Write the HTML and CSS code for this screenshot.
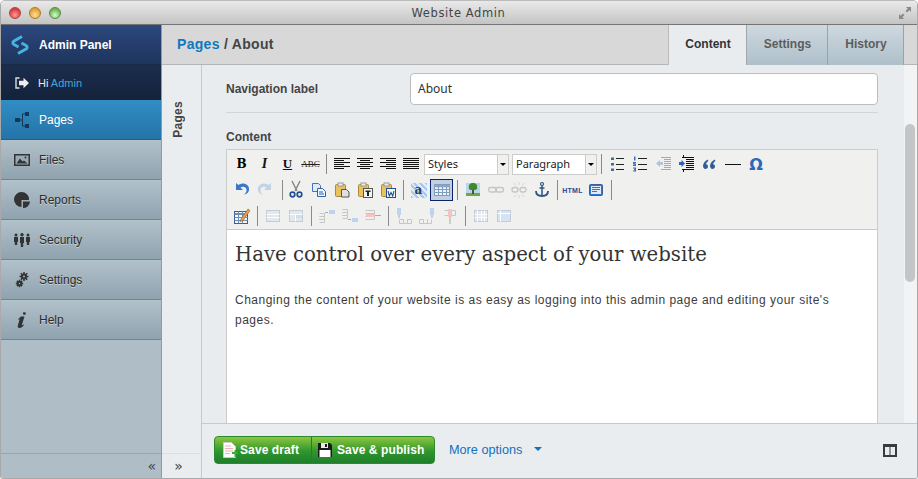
FILE: index.html
```html
<!DOCTYPE html>
<html lang="en">

<head>
  <meta charset="utf-8">
  <title>Website Admin</title>
  <link rel="stylesheet" href="styles.css">
</head>

<body>
  <svg class="defs" width="0" height="0">
    <symbol id="al-left" viewBox="0 0 20 20"><path d="M2 4.5h16M2 6.5h10M2 8.5h16M2 10.5h10M2 12.5h16M2 14.5h10" stroke="#111"/></symbol>
    <symbol id="al-center" viewBox="0 0 20 20"><path d="M2 4.5h16M5 6.5h10M2 8.5h16M5 10.5h10M2 12.5h16M5 14.5h10" stroke="#111"/></symbol>
    <symbol id="al-right" viewBox="0 0 20 20"><path d="M2 4.5h16M8 6.5h10M2 8.5h16M8 10.5h10M2 12.5h16M8 14.5h10" stroke="#111"/></symbol>
    <symbol id="al-full" viewBox="0 0 20 20"><path d="M2 4.5h16M2 6.5h16M2 8.5h16M2 10.5h16M2 12.5h16M2 14.5h16" stroke="#111"/></symbol>
    <symbol id="ul" viewBox="0 0 20 20"><path d="M9 4.500h8M9 10.500h8M9 15.500h8" stroke="#222"/><path d="M4 3.500h3v2.500H4zM4 9h3v2.500H4zM4 14.500h3V17H4z" fill="#4a6a94"/></symbol>
    <symbol id="ol" viewBox="0 0 20 20"><path d="M8 4.500h9M8 10.500h9M8 15.500h9" stroke="#222"/><path d="M4 2.500h1.500v4H4zM3 8h3v1H4.500v.5H6V12H3v-1h1.500v-.5H3zM3 13.500h3v4H3v-1h1.500V16H4v-.800h.5v-.700H3z" fill="#3a6ec0"/></symbol>
    <symbol id="outdent" viewBox="0 0 20 20"><path d="M8 3.500h10M11 5.500h7M11 7.500h7M11 9.500h7M11 11.500h7M11 13.500h7M8 15.500h10" stroke="#aaa"/><path d="M3 9.500l4-3.500v2h3v3H7v2z" fill="#b0c4dc"/></symbol>
    <symbol id="indent" viewBox="0 0 20 20"><path d="M6 3.500h12M10 5.500h8M10 7.500h8M10 9.500h8M10 11.500h8M10 13.500h8M6 15.500h12" stroke="#111"/><path d="M9 9.500L5.500 6v2H3v3h2.500v2z" fill="#2a62c0"/><path d="M7.500 1v2M7.500 16v2" stroke="#111"/></symbol>
    <symbol id="quote" viewBox="0 0 20 20"><path d="M9 5.500C6.500 6.500 4.500 8.500 4 11.500c0 2.200 1 3.500 2.400 3.500C7.800 15 9 14 9 12.500S8 10.200 7 10.200c.3-1.300 1-2.300 2.300-3.300zM16 5.500c-2.500 1-4.500 3-5 6 0 2.200 1 3.500 2.400 3.500 1.400 0 2.600-1 2.600-2.500s-1-2.300-2-2.300c.3-1.300 1-2.300 2.300-3.300z" fill="#2f5d94"/></symbol>
    <symbol id="undo" viewBox="0 0 20 20"><path d="M4 3v7h7L8.500 7.500c2.500-1.500 5.500-.7 6 2 .3 2-.5 3.500-2.500 5 3.500-.5 5.500-3 5-6.500C16 3.500 10.500 2 6.500 5z" fill="#3c78c8"/></symbol>
    <symbol id="redo" viewBox="0 0 20 20"><path d="M16 3v7H9l2.500-2.500c-2.500-1.500-5.500-.7-6 2-.3 2 .5 3.500 2.500 5-3.500-.5-5.500-3-5-6.500C4 3.500 9.500 2 13.500 5z" fill="#c2d2e2"/></symbol>
    <symbol id="cut" viewBox="0 0 20 20"><path d="M6 1l5 10M14 1L9 11" stroke="#888" stroke-width="1.500" fill="none"/><circle cx="6.500" cy="14.500" r="2.300" fill="none" stroke="#24508f" stroke-width="1.700"/><circle cx="13.500" cy="14.500" r="2.300" fill="none" stroke="#24508f" stroke-width="1.700"/></symbol>
    <symbol id="copy" viewBox="0 0 20 20"><path d="M3.500 3.500h6l2 2v6h-8z" fill="#dfeaf8" stroke="#3f75bd"/><path d="M8.500 8.500h5l3 3v5h-8z" fill="#f2f7fd" stroke="#2d62ad"/><path d="M10 12h4M10 14h5" stroke="#2d62ad"/></symbol>
    <symbol id="paste" viewBox="0 0 20 20"><rect x="3.500" y="4.500" width="10" height="12" rx="1" fill="#e9c25e" stroke="#a88a3e"/><rect x="6" y="3" width="5" height="3" fill="#eee" stroke="#999"/><path d="M9.500 9.500h5l2.500 2.500v5H9.500z" fill="#dfe2e5" stroke="#555"/></symbol>
    <symbol id="paste-t" viewBox="0 0 20 20"><rect x="3.500" y="4.500" width="10" height="12" rx="1" fill="#e9c25e" stroke="#a88a3e"/><rect x="6" y="3" width="5" height="3" fill="#eee" stroke="#999"/><rect x="8.500" y="8.500" width="9" height="9" fill="#f4f4f4" stroke="#555"/><path d="M10.500 10.500h5V12h-1.500v4h-2v-4h-1.500z" fill="#222"/></symbol>
    <symbol id="paste-w" viewBox="0 0 20 20"><rect x="3.500" y="4.500" width="10" height="12" rx="1" fill="#e9c25e" stroke="#a88a3e"/><rect x="6" y="3" width="5" height="3" fill="#eee" stroke="#999"/><rect x="8.500" y="8.500" width="9" height="9" fill="#f4f7fc" stroke="#24508f"/><path d="M10 11l1.300 5 1.700-3.500 1.700 3.500 1.300-5" stroke="#24508f" stroke-width="1.100" fill="none"/></symbol>
    <symbol id="table" viewBox="0 0 20 20"><rect x="2.500" y="4.500" width="15" height="11" fill="#eef3fa" stroke="#7f9cc0"/><path d="M2.500 6h15" stroke="#8aa6c8" stroke-width="2.500"/><path d="M6.500 4.500v11M10.500 4.500v11M14.500 4.500v11M2.500 9.500h15M2.500 12.500h15" stroke="#7f9cc0"/></symbol>
    <symbol id="image" viewBox="0 0 20 20"><rect x="3" y="3" width="14" height="13" fill="#b9d6ef"/><rect x="3" y="13" width="14" height="3" fill="#6aa84a"/><path d="M10 3c3 0 4.500 2 4 4 1 2-1 3-2.500 3h-3C7 10 5 9 6 7 5.500 5 7 3 10 3z" fill="#3f8a2e"/><path d="M9 10h2v4H9z" fill="#6b4a22"/></symbol>
    <symbol id="link" viewBox="0 0 20 20"><rect x="2.500" y="7.500" width="8" height="4.500" rx="2.200" fill="none" stroke="#c6c6c6" stroke-width="1.300"/><rect x="9.500" y="7.500" width="8" height="4.500" rx="2.200" fill="none" stroke="#c6c6c6" stroke-width="1.300"/></symbol>
    <symbol id="unlink" viewBox="0 0 20 20"><rect x="3" y="7.500" width="6" height="4.500" rx="2.200" fill="none" stroke="#c6c6c6" stroke-width="1.300"/><rect x="11" y="7.500" width="6" height="4.500" rx="2.200" fill="none" stroke="#c6c6c6" stroke-width="1.300"/><path d="M10 2v3M10 15v3M5 3l2 2.500M15 3l-2 2.500M5 17l2-2.500M15 17l-2-2.500" stroke="#d4d4d4"/></symbol>
    <symbol id="anchor" viewBox="0 0 20 20"><circle cx="10" cy="4" r="1.500" fill="none" stroke="#2f5580" stroke-width="1.200"/><path d="M10 5.500V16M7.500 8h5" stroke="#2f5580" stroke-width="1.500"/><path d="M4 11c0 3.500 2.500 5 6 5s6-1.500 6-5" fill="none" stroke="#2f5580" stroke-width="1.800"/></symbol>
    <symbol id="box" viewBox="0 0 20 20"><rect x="3.500" y="4.500" width="13" height="11" rx="1" fill="#2f78d0" stroke="#3a5f9a"/><rect x="5" y="6" width="10" height="8" fill="#dfeafa"/><path d="M6 7.500h8M6 9.500h8M6 11.500h5" stroke="#2f78d0"/></symbol>
    <symbol id="t-edit" viewBox="0 0 20 20"><rect x="2.500" y="5.500" width="13" height="12" fill="#f2f6fb" stroke="#3a5f8f"/><path d="M2.500 8h13" stroke="#6f8fb8" stroke-width="2"/><path d="M6.500 5.500v12M10.500 5.500v12M2.500 11.500h13M2.500 14.500h13" stroke="#6f8fb8"/><path d="M9 13l7-10 2 1.500-7 10-3 1z" fill="#e8a24a" stroke="#8c5a20" stroke-width=".6"/></symbol>
    <symbol id="t-row" viewBox="0 0 20 20"><rect x="3.500" y="4.500" width="13" height="11" fill="#e2e8ef" stroke="#c3ccd6"/><path d="M3.500 8.500h13M3.500 11.500h13" stroke="#fff"/></symbol>
    <symbol id="t-cell" viewBox="0 0 20 20"><rect x="3.500" y="4.500" width="13" height="11" fill="#e2e8ef" stroke="#c3ccd6"/><path d="M3.500 8.500h13M9.500 8.500v7" stroke="#fff"/><rect x="10" y="9" width="6" height="3" fill="#d2dde8"/></symbol>
    <symbol id="row-a" viewBox="0 0 20 20"><path d="M2.500 7.500h5v3h-5M2.500 10.500h5v3h-5M2.500 13.500h5v3h-5" fill="none" stroke="#c6c6c6"/><path d="M8 6.500h3" stroke="#aaa"/><rect x="12" y="4" width="6" height="4" fill="#bcd4ee"/></symbol>
    <symbol id="row-b" viewBox="0 0 20 20"><path d="M2.500 3.500h5v3h-5M2.500 6.500h5v3h-5M2.500 9.500h5v3h-5" fill="none" stroke="#c6c6c6"/><path d="M8 13.500h3" stroke="#aaa"/><rect x="12" y="12" width="6" height="4" fill="#bcd4ee"/></symbol>
    <symbol id="row-c" viewBox="0 0 20 20"><path d="M2.500 4.500h9v3h-9M2.500 7.500h9v3h-9M2.500 10.500h9v3h-9" fill="none" stroke="#c6c6c6"/><rect x="3" y="8" width="9" height="3" fill="#f4c4c4"/><path d="M12 9.500h6" stroke="#aaa"/></symbol>
    <symbol id="col-a" viewBox="0 0 20 20"><rect x="3" y="2" width="4" height="7" fill="#bcd4ee"/><path d="M5 9v3" stroke="#aaa"/><path d="M5.500 13.500v4h4v-4h-4M9.500 13.500v4h4v-4M13.500 13.500v4h4v-4h-4" fill="none" stroke="#c6c6c6"/></symbol>
    <symbol id="col-b" viewBox="0 0 20 20"><rect x="13" y="2" width="4" height="7" fill="#bcd4ee"/><path d="M15 9v3" stroke="#aaa"/><path d="M2.500 13.500v4h4v-4zM6.500 13.500v4h4v-4M10.500 13.500v4h4v-4" fill="none" stroke="#c6c6c6"/></symbol>
    <symbol id="col-c" viewBox="0 0 20 20"><path d="M4.500 4.500h4v5h-4M8.500 4.500h3v5h-3M11.500 4.500h4v5h-4" fill="none" stroke="#c6c6c6"/><rect x="8" y="3" width="4" height="8" fill="#f4c4c4"/><path d="M10 11v7" stroke="#aaa"/></symbol>
    <symbol id="t-split" viewBox="0 0 20 20"><rect x="3.500" y="4.500" width="13" height="11" fill="#dfe8f2" stroke="#c3ccd6"/><path d="M3.500 8.500h13M3.500 11.500h13M6.500 4.500v11M10.500 4.500v11M13.500 4.500v11" stroke="#fff"/></symbol>
    <symbol id="t-merge" viewBox="0 0 20 20"><rect x="3.500" y="4.500" width="13" height="11" fill="#d3e4f5" stroke="#c3ccd6"/><path d="M3.500 7.500h13M6.500 4.500v11" stroke="#fff"/></symbol>
  </svg>

  <div class="window">
    <header class="titlebar">
      <div class="lights"><i class="light red"></i><i class="light amber"></i><i class="light green"></i></div>
      <div class="win-title">Website Admin</div>
      <svg class="fullscreen" width="14" height="14" viewBox="0 0 14 14"><path d="M8 1h5v5l-1.700-1.700L9 6.500 7.500 5l2.200-2.300zM6 13H1V8l1.700 1.700L5 7.500 6.500 9l-2.200 2.300z" fill="#8a8a8a"/></svg>
    </header>

    <div class="app">
      <aside class="sidebar">
        <div class="brand">
          <svg class="logo" width="20" height="20" viewBox="0 0 20 20"><path d="M12 1.500L4 6c-1.500 1-1.500 2.500 0 3.500l4.500 2.500M8 18.500l8-4.500c1.500-1 1.500-2.500 0-3.500L11.500 8" fill="none" stroke="#45b2e2" stroke-width="3"/></svg>
          <strong>Admin Panel</strong>
        </div>
        <div class="user">
          <svg width="14" height="12" viewBox="0 0 14 12"><path d="M4.500 1H1v10h3.500" fill="none" stroke="#ddd" stroke-width="1.400"/><path d="M4 3.800h4.500V.8L14 6l-5.500 5.200v-3H4z" fill="#eee"/></svg>
          <span>Hi <a class="user-link" href="#">Admin</a></span>
        </div>
        <nav class="nav">
          <a class="nav-item active" href="#">
            <span class="nav-ico"><svg width="14" height="16" viewBox="0 0 14 16"><path d="M0 6h5v4H0zM10 0h4v4h-4zM10 12h4v4h-4z" fill="#123a58"/><path d="M5 8h2.500M7.500 2v12M7.500 2H10M7.500 14H10" stroke="#123a58" fill="none"/></svg></span>Pages</a>
          <a class="nav-item" href="#">
            <span class="nav-ico"><svg width="16" height="12" viewBox="0 0 16 12"><rect x=".75" y=".75" width="14.500" height="10.500" fill="#9aa9b3" stroke="#333" stroke-width="1.500"/><path d="M2.500 9.500l3.500-5 2.500 3 1.500-1 3.500 3z" fill="#333"/><circle cx="11.500" cy="3.500" r="1" fill="#333"/></svg></span>Files</a>
          <a class="nav-item" href="#">
            <span class="nav-ico"><svg width="16" height="16" viewBox="0 0 16 16"><path d="M7.500 0a7.500 7.500 0 1 0 0 15V8h7.500A7.500 7.500 0 0 0 7.500 0z" fill="#333"/><path d="M9 9.500h7a7 7 0 0 1-7 6.500z" fill="#333"/></svg></span>Reports</a>
          <a class="nav-item" href="#">
            <span class="nav-ico"><svg width="16" height="14" viewBox="0 0 16 14"><g fill="#333"><circle cx="2" cy="2" r="1.500"/><circle cx="8" cy="1.700" r="1.700"/><circle cx="14" cy="2" r="1.500"/><path d="M0 4h4v5H3.200v3H.8V9H0zM6 4h4v6H9.200v4H6.800v-4H6zM12 4h4v5h-.8v3h-2.400V9H12z"/></g></svg></span>Security</a>
          <a class="nav-item" href="#">
            <span class="nav-ico"><svg width="14" height="16" viewBox="0 0 14 16"><g fill="none" stroke="#333"><circle cx="9" cy="4.500" r="2" stroke-width="2"/><path d="M9 0v2M9 7v2M4.500 4.500h2M11.500 4.500h2M5.800 1.300l1.400 1.400M10.800 6.300l1.400 1.400M5.800 7.700l1.400-1.400M10.800 2.700l1.400-1.400" stroke-width="1.500"/><circle cx="4.500" cy="11.500" r="1.800" stroke-width="2"/><path d="M4.500 7.800v1.700M4.500 13.500v1.700M.8 11.500h1.700M6.500 11.500h1.700M1.900 8.900l1.200 1.200M5.900 12.900l1.200 1.200M1.900 14.100l1.200-1.200M5.900 10.100l1.200-1.200" stroke-width="1.500"/></g></svg></span>Settings</a>
          <a class="nav-item" href="#">
            <span class="nav-ico"><svg width="10" height="16" viewBox="0 0 10 16"><path d="M6.500 0l2.500.8-.8 2.200-2.400-.8zM4 4.500h3.500L5 12.500c-.2.800.5.800 1.500 0l.5.600c-1.500 2-3 2.900-4.500 2.900-1.300 0-2-.8-1.700-2.200l1.800-6.500-1.100.5-.3-.8z" fill="#333"/></svg></span>Help</a>
        </nav>
        <div class="side-foot"><span class="chev">«</span></div>
      </aside>

      <main class="main">
        <div class="topbar">
          <div class="crumb"><a class="crumb-link" href="#">Pages</a> / About</div>
          <div class="tabs">
            <a class="tab tab-on" href="#">Content</a>
            <a class="tab tab-mid" href="#">Settings</a>
            <a class="tab tab-last" href="#">History</a>
          </div>
        </div>

        <div class="body">
          <div class="pane">
            <div class="pane-label">Pages</div>
            <div class="pane-foot"><span class="chev">»</span></div>
          </div>

          <div class="workspace">
            <div class="scroller">
              <div class="form">
                <div class="field">
                  <label class="field-label">Navigation label</label>
                  <div class="field-input">About</div>
                </div>
                <div class="rule"></div>
                <div class="content-label">Content</div>
                <div class="editor">
                  <div class="toolbar">
                    <div class="tb-row">
                      <span class="btn"><b class="g-b">B</b></span>
                      <span class="btn"><b class="g-i">I</b></span>
                      <span class="btn"><b class="g-u">U</b></span>
                      <span class="btn"><span class="g-abc">ABC</span></span>
                      <i class="sep"></i>
                      <span class="btn"><svg><use href="#al-left"/></svg></span>
                      <span class="btn"><svg><use href="#al-center"/></svg></span>
                      <span class="btn"><svg><use href="#al-right"/></svg></span>
                      <span class="btn"><svg><use href="#al-full"/></svg></span>
                      <span class="select"><span class="select-text">Styles</span><span class="select-arrow"></span></span>
                      <span class="select"><span class="select-text">Paragraph</span><span class="select-arrow"></span></span>
                      <i class="sep"></i>
                      <span class="btn"><svg><use href="#ul"/></svg></span>
                      <span class="btn"><svg><use href="#ol"/></svg></span>
                      <span class="btn"><svg><use href="#outdent"/></svg></span>
                      <span class="btn"><svg><use href="#indent"/></svg></span>
                      <span class="btn"><svg><use href="#quote"/></svg></span>
                      <span class="btn"><i class="g-hr"></i></span>
                      <span class="btn"><span class="g-omega">Ω</span></span>
                    </div>
                    <div class="tb-row">
                      <span class="btn"><svg><use href="#undo"/></svg></span>
                      <span class="btn"><svg><use href="#redo"/></svg></span>
                      <i class="sep sep-late"></i>
                      <span class="btn"><svg><use href="#cut"/></svg></span>
                      <span class="btn"><svg><use href="#copy"/></svg></span>
                      <span class="btn"><svg><use href="#paste"/></svg></span>
                      <span class="btn"><svg><use href="#paste-t"/></svg></span>
                      <span class="btn"><svg><use href="#paste-w"/></svg></span>
                      <i class="sep"></i>
                      <span class="btn"><span class="g-a">a</span></span>
                      <span class="btn btn-on"><svg><use href="#table"/></svg></span>
                      <i class="sep"></i>
                      <span class="btn"><svg><use href="#image"/></svg></span>
                      <span class="btn"><svg><use href="#link"/></svg></span>
                      <span class="btn"><svg><use href="#unlink"/></svg></span>
                      <span class="btn"><svg><use href="#anchor"/></svg></span>
                      <i class="sep"></i>
                      <span class="btn"><span class="g-html">HTML</span></span>
                      <span class="btn"><svg><use href="#box"/></svg></span>
                      <i class="sep"></i>
                    </div>
                    <div class="tb-row">
                      <span class="btn"><svg><use href="#t-edit"/></svg></span>
                      <i class="sep"></i>
                      <span class="btn"><svg><use href="#t-row"/></svg></span>
                      <span class="btn"><svg><use href="#t-cell"/></svg></span>
                      <i class="sep"></i>
                      <span class="btn"><svg><use href="#row-a"/></svg></span>
                      <span class="btn"><svg><use href="#row-b"/></svg></span>
                      <span class="btn"><svg><use href="#row-c"/></svg></span>
                      <i class="sep"></i>
                      <span class="btn"><svg><use href="#col-a"/></svg></span>
                      <span class="btn"><svg><use href="#col-b"/></svg></span>
                      <span class="btn"><svg><use href="#col-c"/></svg></span>
                      <i class="sep"></i>
                      <span class="btn"><svg><use href="#t-split"/></svg></span>
                      <span class="btn"><svg><use href="#t-merge"/></svg></span>
                    </div>
                  </div>
                  <div class="doc">
                    <h1 class="doc-title">Have control over every aspect of your website</h1>
                    <p class="doc-text">Changing the content of your website is as easy as logging into this admin page and editing your site's pages.</p>
                  </div>
                </div>
              </div>
              <div class="scrollbar"><div class="thumb"></div></div>
            </div>

            <footer class="actions">
              <div class="save-group">
                <a class="save save-draft" href="#">
                  <svg width="16" height="17" viewBox="0 0 16 17"><path d="M1.500.5h8l4 4v11h-12z" fill="#fdfdfd" stroke="#ccc"/><path d="M3 4h6M3 6.500h8M3 9h8M3 11.500h5" stroke="#eeb0b0"/><path d="M10 10h2.500V8H14v2h2v2h-2v3h-1.500v-3H10z" fill="#35b030"/></svg>
                  <span>Save draft</span></a>
                <a class="save" href="#">
                  <svg width="14" height="14" viewBox="0 0 14 14"><path d="M0 0h12l2 2v12H0z" fill="#1a1a1a"/><rect x="3" y="0" width="7" height="5" fill="#e8e8e8"/><rect x="7" y="1" width="2" height="3" fill="#1a1a1a"/><rect x="1.500" y="7" width="11" height="7" fill="#fff"/></svg>
                  <span>Save &amp; publish</span></a>
              </div>
              <a class="more" href="#">More options</a>
              <i class="more-arrow"></i>
              <svg class="panel-ico" width="14" height="13" viewBox="0 0 14 13"><path d="M0 0h14v13H0z" fill="#3a3a3a"/><path d="M2 3h4.500v8H2zM7.500 3H12v8H7.500z" fill="#e8ecef"/></svg>
            </footer>
          </div>
        </div>
      </main>
    </div>
  </div>
</body>

</html>
```

FILE: styles.css
```css
html {
  height: 100%;
}

body {
  margin: 0;
  height: 479px;
  background: #fff;
  font-family: "Liberation Sans", Arial, sans-serif;
  font-size: 12px;
  color: #333;
  overflow: hidden;
}

a {
  text-decoration: none;
  color: inherit;
}

.defs {
  display: block;
  height: 0;
}

.window {
  height: 477px;
  display: flex;
  flex-direction: column;
  border: 1px solid #a9a9a9;
  border-top-color: #bbb;
  border-radius: 5px 5px 3px 3px;
  overflow: hidden;
}

/* title bar */
.titlebar {
  height: 23px;
  flex: none;
  display: grid;
  grid-template-columns: 1fr auto 1fr;
  align-items: center;
  background: linear-gradient(#e9e9e9, #c4c4c4);
  border-bottom: 1px solid #757575;
}

.lights {
  display: flex;
  gap: 8px;
  padding-left: 8px;
}

.light {
  width: 12px;
  height: 12px;
  border-radius: 50%;
  border: 1px solid #888;
  box-sizing: border-box;
}

.red { background: radial-gradient(circle at 50% 70%, #f99, #d93a3a 70%); border-color: #a44; }
.amber { background: radial-gradient(circle at 50% 70%, #fd9, #e0a030 70%); border-color: #a97a2a; }
.green { background: radial-gradient(circle at 50% 70%, #cfc, #70b050 70%); border-color: #5a8a48; }

.win-title {
  margin-right: 1px;
  font-family: "DejaVu Sans", sans-serif;
  font-size: 11.5px;
  letter-spacing: .6px;
  color: #444;
}

.fullscreen {
  justify-self: end;
  margin-right: 5px;
}

.app {
  flex: 1;
  min-height: 0;
  display: flex;
}

/* sidebar */
.sidebar {
  width: 160px;
  flex: none;
  display: flex;
  flex-direction: column;
  background: #afbdc6;
  border-right: 1px solid #8f9ba3;
}

.brand {
  height: 40px;
  padding-left: 9px;
  display: flex;
  align-items: center;
  gap: 9px;
  background: linear-gradient(#2b477c, #1e345c);
  box-shadow: inset 0 -1px 0 #1b2a45;
  color: #fff;
  font-size: 12px;
}

.user {
  height: 35px;
  display: flex;
  align-items: center;
  gap: 9px;
  padding-left: 14px;
  background: linear-gradient(#1b2d4e, #14223a);
  color: #e4e8ee;
  font-size: 11px;
}

.user-link {
  color: #3fa8dc;
}

.nav-item {
  height: 39px;
  display: flex;
  align-items: center;
  background: linear-gradient(#b2c1ca, #8fa3af);
  border-bottom: 1px solid #74858f;
  color: #2c2c2c;
  text-shadow: 0 1px 0 #c7d2d9;
}

.nav-item.active {
  background: linear-gradient(#318dc4, #2474a8);
  border-bottom-color: #1e5f8c;
  color: #fff;
  text-shadow: none;
}

.nav-ico {
  width: 38px;
  flex: none;
  padding-left: 3px;
  box-sizing: border-box;
  display: flex;
  justify-content: center;
}

.side-foot {
  margin-top: auto;
  height: 24px;
  border-top: 1px solid #98a6ae;
  display: flex;
  justify-content: flex-end;
  align-items: center;
  padding-right: 5px;
}

.chev {
  font-family: "DejaVu Sans", sans-serif;
  font-size: 14px;
  color: #444;
}

/* main column */
.main {
  flex: 1;
  min-width: 0;
  display: flex;
  flex-direction: column;
  background: #e9ecef;
}

.topbar {
  height: 39px;
  flex: none;
  display: flex;
  justify-content: space-between;
  background: #d8d8d8;
  border-bottom: 1px solid #b5b5b5;
}

.crumb {
  padding-left: 15px;
  line-height: 38px;
  font-size: 14px;
  font-weight: bold;
  letter-spacing: .3px;
  color: #444;
}

.crumb-link {
  color: #0f78c0;
}

.tabs {
  display: flex;
  padding-right: 13px;
  height: 40px;
}

.tab {
  box-sizing: border-box;
  padding-left: 1px;
  text-align: center;
  line-height: 38px;
  font-weight: bold;
  color: #5c5c5c;
  background: linear-gradient(#cfd8df, #aebfca);
  border-right: 1px solid #8fa5b3;
}

.tab-on {
  width: 79px;
  color: #333;
  background: #e8ecef;
  border-left: 1px solid #bbb;
  border-right: 1px solid #a0a8ae;
}

.tab-mid {
  width: 81px;
}

.tab-last {
  width: 76px;
}

.body {
  flex: 1;
  min-height: 0;
  display: flex;
}

.pane {
  width: 39px;
  flex: none;
  display: flex;
  flex-direction: column;
  background: #eaedf0;
  border-right: 1px solid #c9c9c9;
}

.pane-label {
  writing-mode: vertical-rl;
  transform: rotate(180deg);
  align-self: center;
  margin: 36px 8px 0 0;
  font-weight: bold;
  letter-spacing: .3px;
  color: #444;
}

.pane-foot {
  margin-top: auto;
  height: 24px;
  border-top: 1px solid #dcdfe2;
  display: flex;
  justify-content: center;
  align-items: center;
  padding-right: 6px;
}

.workspace {
  flex: 1;
  min-width: 0;
  display: flex;
  flex-direction: column;
}

.scroller {
  flex: 1;
  min-height: 0;
  display: flex;
  overflow: hidden;
}

.form {
  flex: none;
  width: 652px;
  margin-left: 24px;
  padding-top: 8px;
}

.field {
  display: flex;
  align-items: center;
  height: 32px;
}

.field-label {
  width: 184px;
  font-weight: bold;
  color: #444;
}

.field-input {
  flex: 1;
  height: 100%;
  box-sizing: border-box;
  padding-left: 7px;
  line-height: 29px;
  font-family: "Noto Sans", sans-serif;
  font-size: 12px;
  background: #fff;
  border: 1px solid #bcbcbc;
  border-radius: 4px;
}

.rule {
  margin-top: 7px;
  border-top: 1px solid #d2d4d6;
}

.content-label {
  margin: 17px 0 5px;
  line-height: 14px;
  font-weight: bold;
  color: #444;
}

.editor {
  border: 1px solid #ccc;
  border-bottom: 0;
}

.toolbar {
  height: 78px;
  padding-top: 1px;
  background: #f0f0ee;
  border-bottom: 1px solid #ccc;
}

.tb-row {
  height: 26px;
  padding-left: 3px;
  display: flex;
  align-items: center;
}

.btn {
  width: 23px;
  height: 22px;
  flex: none;
  box-sizing: border-box;
  display: flex;
  align-items: center;
  justify-content: center;
}

.btn svg {
  width: 20px;
  height: 20px;
}

.btn-on {
  background: #c2cfe0;
  border: 1px solid #0a246a;
}

.sep {
  width: 8px;
  height: 20px;
  flex: none;
  background: linear-gradient(#8a8a8a, #8a8a8a) center / 1px 100% no-repeat;
}

.sep-late {
  background-position: 6px 0;
}

.g-b {
  font-family: "DejaVu Serif", serif;
  font-size: 12px;
  color: #000;
}

.g-i {
  font-family: "Liberation Serif", serif;
  font-size: 14px;
  font-style: italic;
  color: #111;
}

.g-u {
  font-family: "Liberation Serif", serif;
  font-size: 13px;
  color: #111;
  text-decoration: underline;
}

.g-abc {
  font-family: "Liberation Serif", serif;
  font-size: 9px;
  color: #222;
  text-decoration: line-through;
}

.g-hr {
  width: 16px;
  height: 1px;
  margin-left: 2px;
  background: #111;
}

.g-omega {
  margin-left: 3px;
  font-family: "DejaVu Sans", sans-serif;
  font-size: 16px;
  font-weight: bold;
  color: #2f66b8;
}

.g-a {
  width: 16px;
  height: 15px;
  font-family: "DejaVu Serif", serif;
  font-size: 12px;
  font-weight: bold;
  line-height: 14px;
  text-align: center;
  color: #26406a;
  background: repeating-linear-gradient(45deg, #a8c8ee 0 2px, #e4eefa 2px 4px);
}

.g-html {
  font-size: 7px;
  font-weight: bold;
  letter-spacing: .3px;
  color: #2a4a8f;
}

.select {
  width: 85px;
  height: 21px;
  flex: none;
  box-sizing: border-box;
  margin-left: 2px;
  display: flex;
  background: #fff;
  border: 1px solid #ccc;
}

.select + .select {
  margin-left: 3px;
}

.select-text {
  flex: 1;
  padding-left: 3px;
  line-height: 18px;
  font-family: "Noto Sans", sans-serif;
  font-size: 11px;
  color: #222;
}

.select-arrow {
  width: 10px;
  background: #f0f0ee;
  border-left: 1px solid #ccc;
  display: flex;
  align-items: center;
  justify-content: center;
}

.select-arrow::after {
  content: "";
  border: 3px solid transparent;
  border-top: 3px solid #000;
  border-bottom: 0;
}

.doc {
  height: 240px;
  padding: 11px 8px 10px;
  background: #fff;
}

.doc-title {
  margin: 0;
  font-family: "DejaVu Serif", serif;
  font-size: 19.7px;
  font-weight: normal;
  line-height: 27px;
  color: #333;
}

.doc-text {
  margin: 22px 0 0;
  width: 610px;
  line-height: 20px;
  letter-spacing: .5px;
  color: #3c3c3c;
}

.scrollbar {
  width: 13px;
  margin-left: 26px;
  flex: none;
  background: #f1f3f5;
}

.thumb {
  width: 10px;
  height: 158px;
  margin: 59px 0 0 1px;
  border-radius: 5px;
  background: #c3c5c7;
}

/* bottom bar */
.actions {
  height: 54px;
  flex: none;
  display: flex;
  align-items: center;
  background: #eaedf0;
  border-top: 1px solid #c9c9c9;
  padding-left: 12px;
}

.save-group {
  display: flex;
  width: 221px;
  height: 28px;
  margin-bottom: 2px;
  box-sizing: border-box;
  border: 1px solid #2b8a2b;
  border-radius: 4px;
  background: linear-gradient(#8dc63f, #2e962e 55%, #1f7f2a);
  color: #fff;
  font-weight: bold;
  letter-spacing: .1px;
  white-space: nowrap;
}

.save {
  display: flex;
  align-items: center;
  gap: 5px;
  padding-left: 6px;
}

.save-draft {
  width: 97px;
  flex: none;
  gap: 2px;
  box-sizing: border-box;
  padding-left: 7px;
  border-right: 1px solid #1f7f2a;
}

.more {
  margin: 0 0 2px 14px;
  font-size: 12.7px;
  color: #0f72c0;
}

.more-arrow {
  margin-left: 12px;
  margin-bottom: 4px;
  border: 4px solid transparent;
  border-top: 4px solid #0f72c0;
  border-bottom: 0;
}

.panel-ico {
  margin: 0 20px 2px auto;
}
```
